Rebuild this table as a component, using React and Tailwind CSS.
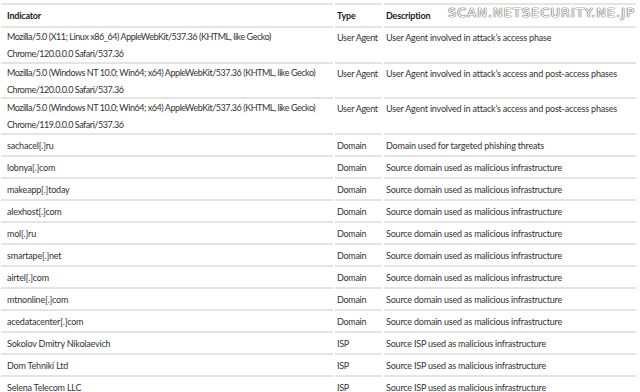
const rows = [
  { h: "h-[36px]", ind: ["Mozilla/5.0 (X11; Linux x86_64) AppleWebKit/537.36 (KHTML, like Gecko)", "Chrome/120.0.0.0 Safari/537.36"], type: "User Agent", desc: "User Agent involved in attack’s access phase" },
  { h: "h-[35px]", ind: ["Mozilla/5.0 (Windows NT 10.0; Win64; x64) AppleWebKit/537.36 (KHTML, like Gecko)", "Chrome/120.0.0.0 Safari/537.36"], type: "User Agent", desc: "User Agent involved in attack’s access and post-access phases" },
  { h: "h-[36px]", ind: ["Mozilla/5.0 (Windows NT 10.0; Win64; x64) AppleWebKit/537.36 (KHTML, like Gecko)", "Chrome/119.0.0.0 Safari/537.36"], type: "User Agent", desc: "User Agent involved in attack’s access and post-access phases" },
  { ind: ["sachacel[.]ru"], type: "Domain", desc: "Domain used for targeted phishing threats" },
  { ind: ["lobnya[.]com"], type: "Domain", desc: "Source domain used as malicious infrastructure" },
  { ind: ["makeapp[.]today"], type: "Domain", desc: "Source domain used as malicious infrastructure" },
  { ind: ["alexhost[.]com"], type: "Domain", desc: "Source domain used as malicious infrastructure" },
  { ind: ["mol[.]ru"], type: "Domain", desc: "Source domain used as malicious infrastructure" },
  { ind: ["smartape[.]net"], type: "Domain", desc: "Source domain used as malicious infrastructure" },
  { ind: ["airtel[.]com"], type: "Domain", desc: "Source domain used as malicious infrastructure" },
  { ind: ["mtnonline[.]com"], type: "Domain", desc: "Source domain used as malicious infrastructure" },
  { ind: ["acedatacenter[.]com"], type: "Domain", desc: "Source domain used as malicious infrastructure" },
  { ind: ["Sokolov Dmitry Nikolaevich"], type: "ISP", desc: "Source ISP used as malicious infrastructure" },
  { ind: ["Dom Tehniki Ltd"], type: "ISP", desc: "Source ISP used as malicious infrastructure" },
  { ind: ["Selena Telecom LLC"], type: "ISP", desc: "Source ISP used as malicious infrastructure" },
];

const Cell = ({ className = "", children }) => (
  <div className={`flex flex-col justify-center border-b-2 border-[#e4e4e2] ${className}`}>
    {children}
  </div>
);

const Row = ({ h = "h-[22px]", children }) => (
  <div className={`flex gap-[2px] ${h}`}>{children}</div>
);

export default function App() {
  return (
    <div className="relative w-[640px] h-[392px] overflow-hidden bg-white pt-[3px] text-[#333] text-[9px] tracking-[-0.2px] leading-[17px] font-['Lato','Liberation_Sans',sans-serif]">
      <div className="ml-[1px] w-[635px]">
        <div className="flex gap-[2px]">
          <div className="w-[332px] border-t-2 border-[#e4e4e2]" />
          <div className="w-[47px] border-t-2 border-[#e4e4e2]" />
          <div className="flex-1 border-t-2 border-[#e4e4e2]" />
        </div>
        <Row h="h-[23px]">
          <Cell className="w-[332px] pl-[6px] font-bold text-[#222]">Indicator</Cell>
          <Cell className="w-[47px] pl-[2px] font-bold text-[#222]">Type</Cell>
          <Cell className="flex-1 pl-[2px] font-bold text-[#222]">Description</Cell>
        </Row>
        {rows.map((r, i) => {
          const ua = r.ind.length > 1;
          return (
            <Row key={i} h={r.h}>
              <Cell className={`w-[332px] pl-[6px] ${ua ? "tracking-[-0.45px]" : ""}`}>
                {r.ind.map((t, j) => (
                  <span key={j} className="whitespace-nowrap">{t}</span>
                ))}
              </Cell>
              <Cell className={`w-[47px] pl-[2px] whitespace-nowrap tracking-[-0.3px] ${ua ? "justify-start pt-[1px]" : ""}`}>{r.type}</Cell>
              <Cell className={`flex-1 pl-[2px] whitespace-nowrap ${ua ? "justify-start pt-[1px]" : ""}`}>{r.desc}</Cell>
            </Row>
          );
        })}
      </div>
      <div className="absolute left-[448px] top-[6px] text-[13px] leading-[14px] tracking-[1px] text-white font-['DejaVu_Sans',sans-serif] [text-shadow:0_0_1px_#555,0_0_1px_#555,0_0_1px_#555]">
        SCAN.NETSECURITY.NE.JP
      </div>
    </div>
  );
}
